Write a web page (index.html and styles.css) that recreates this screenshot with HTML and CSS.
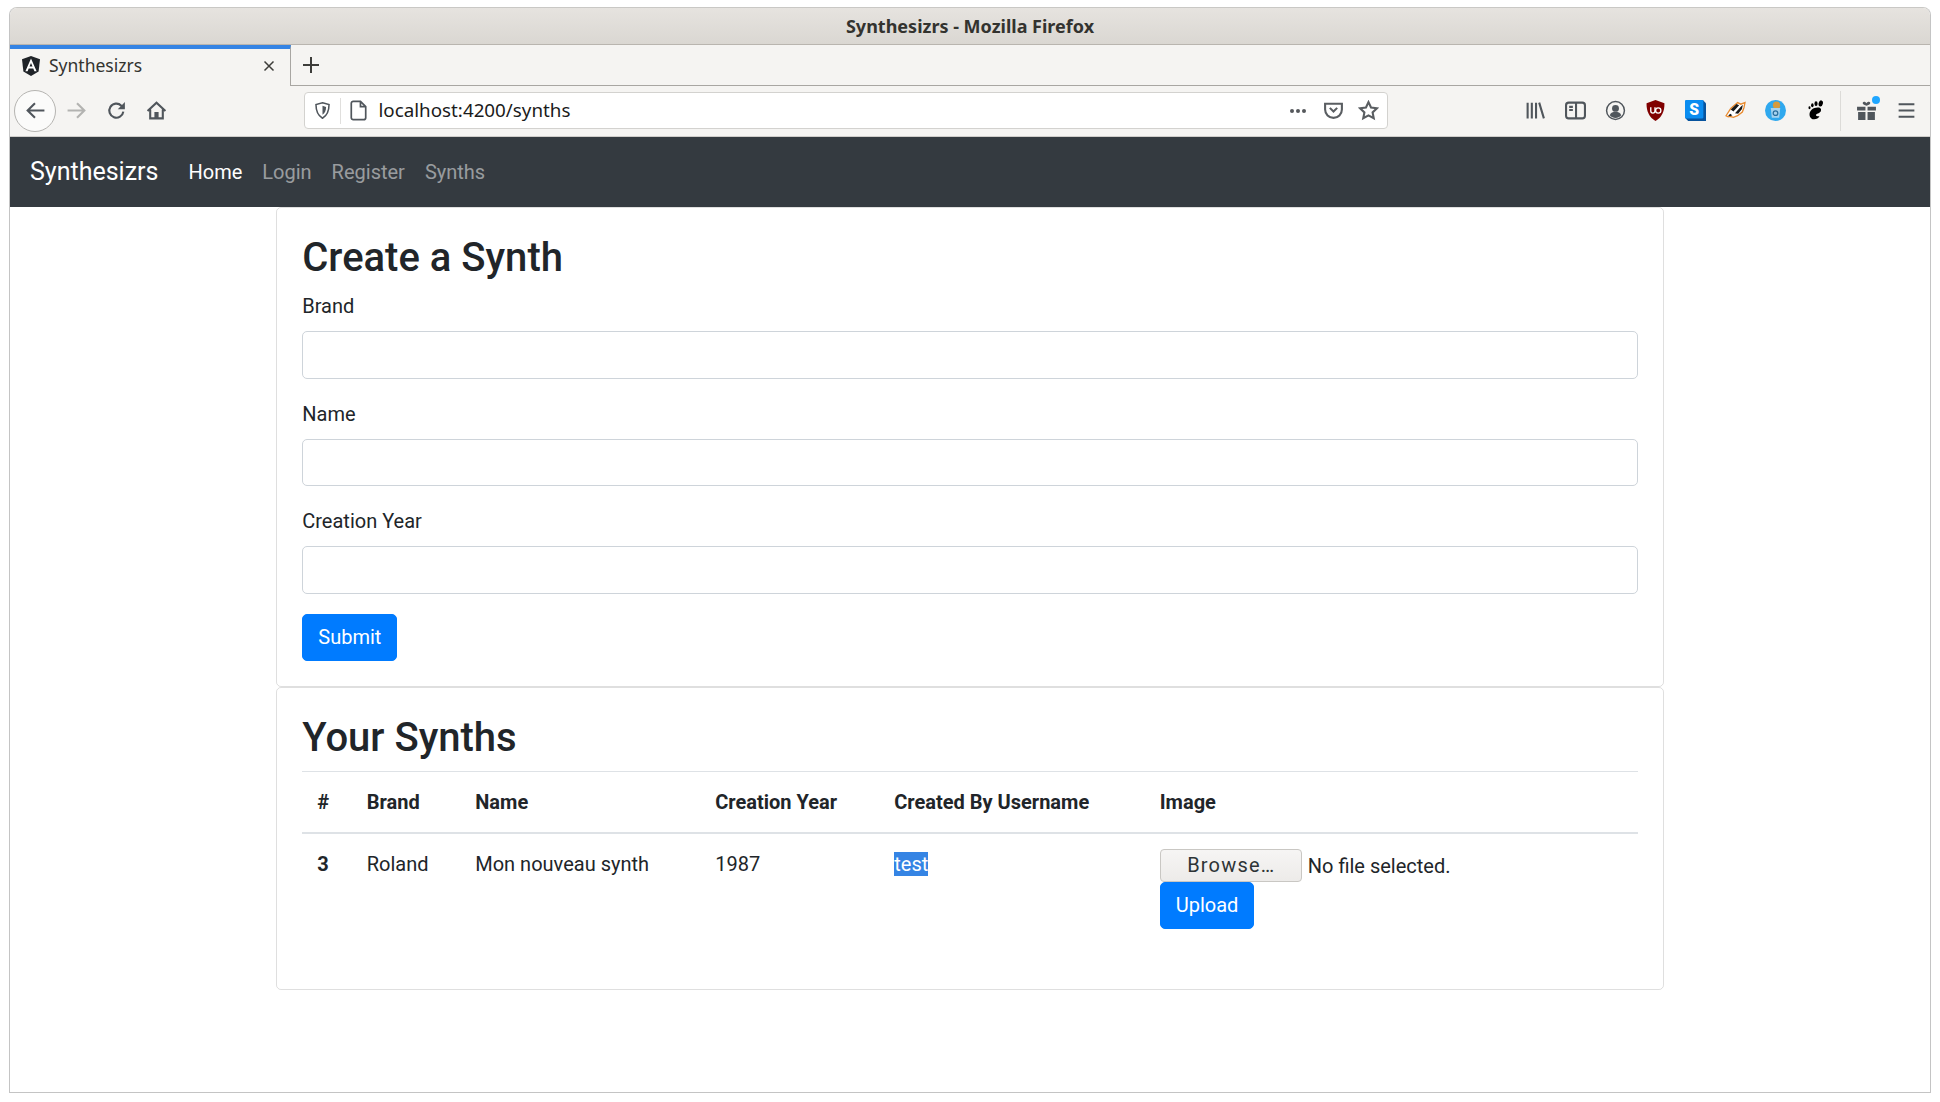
FILE: index.html
```html
<!DOCTYPE html>
<html lang="en">
<head>
    <meta charset="UTF-8">
    <meta name="viewport" content="width=device-width, initial-scale=1.0">
    <title>Synthesizrs - Mozilla Firefox</title>
    <link rel="stylesheet" href="styles.css">
</head>
<body>
    <div class="window">
        <div class="titlebar">Synthesizrs - Mozilla Firefox</div>

        <div class="tabstrip">
            <div class="tab">
                <svg class="favicon" viewBox="0 0 20 20">
                    <path fill="#1f2328" d="M10 0 19 3.300 17.600 15.500 10 20 2.400 15.500 1 3.300Z"/>
                    <path fill="#fff" fill-rule="evenodd" d="M10 2.600 4.400 15.200h2.200l1.100-2.800h4.600l1.100 2.800h2.200ZM8.500 10.600 10 6.900l1.500 3.700Z"/>
                </svg>
                <span class="tab-title">Synthesizrs</span>
                <svg class="tab-close" viewBox="0 0 12 12"><path d="M1.500 1.500 10.500 10.500M10.500 1.500 1.500 10.500"/></svg>
            </div>
            <div class="newtab">
                <svg viewBox="0 0 18 18"><path d="M9 1V17M1 9H17"/></svg>
            </div>
        </div>

        <div class="toolbar">
            <div class="back-btn">
                <svg class="ico" viewBox="0 0 20 20"><path d="M18.500 10H3M9.500 3 2.500 10l7 7"/></svg>
            </div>
            <div class="tool-btn">
                <svg class="ico faded" viewBox="0 0 20 20"><path d="M1.500 10H17M10.500 3 17.500 10l-7 7"/></svg>
            </div>
            <div class="tool-btn">
                <svg class="ico" viewBox="0 0 20 20"><path d="M16.500 11a6.700 6.700 0 1 1-1.900-5.600L17 7.500"/><path class="solid" d="M18 2V8.800H11.200Z"/></svg>
            </div>
            <div class="tool-btn">
                <svg class="ico" viewBox="0 0 20 20"><path d="M1.500 10.500 10 2.500l8.500 8M4 9v8.500h12V9"/><path class="solid" d="M8 11.500h4V17.500H8Z"/></svg>
            </div>

            <div class="urlbar">
                <svg class="url-shield" viewBox="0 0 16 16"><path class="thin" d="M8 1.500 13.500 3c0 5-1 9-5.500 11.500C3.500 12 2.500 8 2.500 3Z"/><path class="solid" d="M8 4 11 5c0 3-.8 5-3 6.500Z"/></svg>
                <span class="url-sep"></span>
                <svg class="url-page" viewBox="0 0 16 16"><path class="thin" d="M2.500 2.500a1.500 1.500 0 0 1 1.500-1.500H9.500L13.500 5v8.500a1.500 1.500 0 0 1-1.500 1.500H4a1.500 1.500 0 0 1-1.500-1.500ZM9.500 1V5H13.500"/></svg>
                <span class="url-text">localhost:4200/synths</span>
                <span class="url-dots"><i></i><i></i><i></i></span>
                <svg class="url-pocket" viewBox="0 0 20 20"><path d="M2 3.500h16V9a8 8 0 0 1-16 0Z"/><path d="M6.500 7.500 10 11l3.500-3.500"/></svg>
                <svg class="url-star" viewBox="0 0 20 20"><path d="M10 2l2.400 5.200 5.600.7-4.100 3.900 1.100 5.600-5-2.800-5 2.800 1.100-5.600L2 7.900l5.600-.7Z"/></svg>
            </div>

            <div class="tool-icons">
                <div class="tool-btn">
                    <svg class="ico" viewBox="0 0 20 20"><path d="M2.500 2.500V17.500M6.500 2.500V17.500M10.500 2.500V17.500M13.500 2.500 18 17.500"/></svg>
                </div>
                <div class="tool-btn">
                    <svg class="ico" viewBox="0 0 20 20"><rect x="1" y="2.500" width="18" height="15" rx="2.500"/><path d="M10.500 2.500V17.500M4 6.500H7.500M4 9.500H7.500"/></svg>
                </div>
                <div class="tool-btn">
                    <svg class="ico thin-ico" viewBox="0 0 20 20"><circle cx="10" cy="10" r="8.500"/><circle class="solid" cx="10" cy="8" r="3.300"/><path class="solid" d="M4.500 14.500c1-2.500 3-3 5.500-3s4.500.5 5.500 3c-1.500 1.800-3.500 2.600-5.500 2.600s-4-.8-5.500-2.600Z"/></svg>
                </div>
                <div class="tool-btn">
                    <svg class="logo" viewBox="0 0 20 20">
                        <path fill="#800000" d="M10 0 18.500 3c.3 7.800-2.700 13.500-8.500 17C4.200 16.500 1.200 10.800 1.500 3Z"/>
                        <path fill="none" stroke="#fff" stroke-width="1.300" d="M5.500 7v3.500a2 2 0 0 0 4 0V7"/>
                        <circle fill="none" stroke="#fff" stroke-width="1.300" cx="12.600" cy="10" r="2.500"/>
                    </svg>
                </div>
                <div class="tool-btn">
                    <svg class="logo" viewBox="0 0 20 20">
                        <path fill="#07539e" d="M0 17 3 20H20V3L17 0Z"/>
                        <rect fill="#0a8cf0" x="0" y="0" width="17.500" height="17.500" rx="1"/>
                        <text class="skype-s" x="8.800" y="14" text-anchor="middle">S</text>
                    </svg>
                </div>
                <div class="tool-btn">
                    <svg class="logo" viewBox="0 0 20 20">
                        <path fill="#fff" stroke="#e98a2e" stroke-width="1.300" d="M1 15 5.500 8 9 5l3-2.500L15 4l4-1.500-1 5-1.500 4L12 15l-4 1.500-3.500-1-1.500.5Z"/>
                        <path fill="#1a1a1a" d="M5.500 9 11 3.800 13.500 5 8 11ZM9.500 12.500 15 6.500l2-2-.8 4-3.700 4.500ZM3 15l2-2 2 1.500-2 1Z"/>
                    </svg>
                </div>
                <div class="tool-btn">
                    <svg class="logo" viewBox="0 0 20 20">
                        <circle fill="#2fa8ee" cx="10" cy="10" r="10"/>
                        <circle fill="#d59b3d" cx="11" cy="5" r="3.500"/>
                        <path fill="#a6d3ef" d="M5.500 7.500h9L13.500 17h-7Z"/>
                        <circle fill="none" stroke="#2a6f9f" stroke-width="1.200" cx="10" cy="12.500" r="2.200"/>
                    </svg>
                </div>
                <div class="tool-btn">
                    <svg class="logo" viewBox="0 0 20 20">
                        <path fill="#000" d="M12 7.200c3-.5 4 2 2.800 4-1.200 1.800-4 1.600-4.300 3-.2 1.200 2 1.500 3.300 1.300-1.200 2.800-5.800 4-8 1.800C3.500 15 4 11 6.500 9c1.700-1.300 3.500-1.500 5.500-1.800Z"/>
                        <ellipse fill="#000" cx="15" cy="3.300" rx="2" ry="3" transform="rotate(15 15 3.300)"/>
                        <ellipse fill="#000" cx="10.500" cy="3.500" rx="1.500" ry="2.300"/>
                        <ellipse fill="#000" cx="7" cy="5" rx="1.200" ry="1.800"/>
                        <ellipse fill="#000" cx="4.300" cy="7.300" rx="1" ry="1.400"/>
                    </svg>
                </div>
                <span class="tool-sep"></span>
                <div class="tool-btn">
                    <svg class="logo" viewBox="0 0 20 20">
                        <path fill="#50565c" d="M1 6.500H9V10H1ZM11 6.500H19V10H11ZM2 11.500H9V19H2ZM11 11.500H18V19H11Z"/>
                        <path fill="#50565c" d="M10 5.500C7 4.500 6 3.500 6.500 2.300S9 1.500 10 3c1-1.500 3-1.800 3.500-.7S13 4.500 10 5.500Z"/>
                    </svg>
                    <span class="gift-dot"></span>
                </div>
                <div class="tool-btn">
                    <svg class="ico" viewBox="0 0 20 20"><path d="M2.500 4H17.500M2.500 10H17.500M2.500 16H17.500"/></svg>
                </div>
            </div>
        </div>

        <nav class="navbar">
            <a class="navbar-brand" href="#">Synthesizrs</a>
            <a class="nav-link active" href="#">Home</a>
            <a class="nav-link" href="#">Login</a>
            <a class="nav-link" href="#">Register</a>
            <a class="nav-link" href="#">Synths</a>
        </nav>

        <div class="container">
            <div class="card">
                <h2>Create a Synth</h2>
                <div class="form-group">
                    <label for="brand">Brand</label>
                    <input id="brand" class="form-control" type="text">
                </div>
                <div class="form-group">
                    <label for="name">Name</label>
                    <input id="name" class="form-control" type="text">
                </div>
                <div class="form-group">
                    <label for="year">Creation Year</label>
                    <input id="year" class="form-control" type="text">
                </div>
                <button class="btn">Submit</button>
            </div>

            <div class="card">
                <h2>Your Synths</h2>
                <table class="table">
                    <thead>
                        <tr>
                            <th class="col-id">#</th>
                            <th class="col-brand">Brand</th>
                            <th class="col-name">Name</th>
                            <th class="col-year">Creation Year</th>
                            <th class="col-user">Created By Username</th>
                            <th>Image</th>
                        </tr>
                    </thead>
                    <tbody>
                        <tr>
                            <th>3</th>
                            <td>Roland</td>
                            <td>Mon nouveau synth</td>
                            <td>1987</td>
                            <td><span class="selected">test</span></td>
                            <td>
                                <div class="file-row">
                                    <button class="browse">Browse…</button>
                                    <span class="file-name">No file selected.</span>
                                </div>
                                <button class="btn">Upload</button>
                            </td>
                        </tr>
                    </tbody>
                </table>
            </div>
        </div>
    </div>
</body>
</html>
```

FILE: styles.css
```css
* {
    box-sizing: border-box;
}

body {
    margin: 0;
    background: #fff;
    font-family: Roboto, Arial, sans-serif;
    font-size: 20px;
    line-height: 1.5;
    color: #212529;
}

/* Browser window */
.window {
    width: 1922px;
    height: 1086px;
    margin: 7px 9px 0;
    border: 1px solid #c4c4c4;
    border-top-color: #c9c8c5;
    border-radius: 8px 8px 0 0;
    overflow: hidden;
    background: #fff;
}

.titlebar {
    height: 37px;
    border-bottom: 1px solid #b9b5af;
    background: linear-gradient(#e6e3df, #dad7d2);
    font-family: "Noto Sans", sans-serif;
    font-size: 18px;
    font-weight: 700;
    line-height: 36px;
    text-align: center;
    color: #33332f;
}

.tabstrip {
    display: flex;
    height: 41px;
    background: #f5f4f2;
}

.tab {
    display: flex;
    align-items: center;
    width: 281px;
    border-top: 4px solid #3584e4;
    border-right: 1px solid #a8a6a2;
    padding: 0 15px 4px 11px;
}

.favicon {
    width: 20px;
    height: 20px;
}

.tab-title {
    flex: 1;
    margin-left: 8px;
    font-family: "Noto Sans", sans-serif;
    font-size: 17.500px;
    color: #33332f;
}

.tab-close {
    width: 12px;
    height: 12px;
    fill: none;
    stroke: #3d3d3a;
    stroke-width: 1.500;
}

.newtab {
    display: flex;
    flex: 1;
    align-items: center;
    border-bottom: 1px solid #a8a6a2;
    padding-left: 11px;
}

.newtab svg {
    width: 18px;
    height: 18px;
    fill: none;
    stroke: #3d3d3a;
    stroke-width: 2;
}

.toolbar {
    display: flex;
    align-items: center;
    height: 51px;
    border-bottom: 1px solid #cfcdca;
    padding: 0 0 1px 4px;
    background: #f5f4f2;
}

.back-btn {
    display: flex;
    align-items: center;
    justify-content: center;
    width: 42px;
    height: 42px;
    border: 1px solid #b5b4b1;
    border-radius: 50%;
    background: #fbfbfa;
}

.tool-btn {
    position: relative;
    display: flex;
    align-items: center;
    justify-content: center;
    width: 40px;
    height: 40px;
}

.ico {
    width: 21px;
    height: 21px;
    fill: none;
    stroke: #50565c;
    stroke-width: 2;
}

.ico.faded {
    stroke: #b3b3b1;
}

.thin-ico {
    stroke-width: 1.400;
}

.solid {
    fill: #50565c;
    stroke: none;
}

.logo {
    width: 21px;
    height: 21px;
}

.skype-s {
    font-family: Roboto, Arial, sans-serif;
    font-size: 15px;
    font-weight: 900;
    fill: #fff;
}

.gift-dot {
    position: absolute;
    top: 5px;
    right: 6px;
    width: 8px;
    height: 8px;
    border-radius: 50%;
    background: #1fa6ff;
}

/* Location bar */
.urlbar {
    display: flex;
    align-items: center;
    width: 1084px;
    height: 37px;
    margin-left: 128px;
    border: 1px solid #d3d2cf;
    border-radius: 4px;
    padding: 0 5px 0 8px;
    background: #fff;
}

.url-shield {
    width: 19px;
    height: 19px;
}

.url-page {
    width: 21px;
    height: 21px;
}

.url-shield path.thin,
.url-page path.thin {
    fill: none;
    stroke: #50565c;
    stroke-width: 1.300;
}

.url-sep {
    width: 1px;
    height: 26px;
    margin: 0 7px 0 8px;
    background: #e0dfdd;
}

.url-text {
    flex: 1;
    margin-left: 9.500px;
    font-family: "Noto Sans", sans-serif;
    font-size: 18.800px;
    color: #1b1b1b;
}

.url-dots {
    display: flex;
    gap: 2px;
    margin-right: 17px;
}

.url-dots i {
    width: 4px;
    height: 4px;
    border-radius: 50%;
    background: #55585c;
}

.url-pocket,
.url-star {
    width: 21px;
    height: 21px;
    fill: none;
    stroke: #5a5e62;
    stroke-width: 2;
}

.url-pocket {
    margin-right: 14px;
}

.url-star {
    margin-right: 3px;
}

.tool-icons {
    display: flex;
    align-items: center;
    margin-left: 127px;
}

.tool-sep {
    width: 1px;
    height: 40px;
    margin: 0 5px 0 5px;
    background: #dcdbd8;
}

/* Page content */
.navbar {
    display: flex;
    align-items: center;
    height: 70px;
    padding: 10px 20px;
    background: #343a40;
}

.navbar-brand {
    margin-right: 20px;
    font-size: 25px;
    color: #fff;
    text-decoration: none;
}

.nav-link {
    padding: 10px;
    color: rgba(255, 255, 255, .5);
    text-decoration: none;
}

.nav-link.active {
    color: #fff;
}

.container {
    width: 1425px;
    margin: 0 auto;
    padding: 0 18.750px;
}

.card {
    border: 1px solid rgba(0, 0, 0, .125);
    border-radius: 5px;
    padding: 25px;
}

h2 {
    margin: 0 0 9px;
    padding-top: 1px;
    font-size: 40px;
    font-weight: 500;
    line-height: 1.200;
}

.form-group {
    margin-bottom: 20px;
}

label {
    display: block;
    margin-bottom: 10px;
}

.form-control {
    display: block;
    width: 100%;
    height: 47.500px;
    border: 1px solid #ced4da;
    border-radius: 5px;
    padding: 7.500px 15px;
    background: #fff;
    font: inherit;
}

.btn {
    display: block;
    border: 1px solid #007bff;
    border-radius: 5px;
    padding: 7.500px 15px;
    background: #007bff;
    font: inherit;
    color: #fff;
}

/* Table */
.table {
    width: 100%;
    margin-bottom: 20px;
    border-collapse: collapse;
    table-layout: fixed;
}

.table th,
.table td {
    border-top: 1px solid #dee2e6;
    padding: 15px;
    text-align: left;
    vertical-align: top;
}

.table th {
    font-weight: 700;
}

.table thead th {
    border-bottom: 2.500px solid #dee2e6;
}

.col-id {
    width: 49.500px;
}

.col-brand {
    width: 108.500px;
}

.col-name {
    width: 240px;
}

.col-year {
    width: 179px;
}

.col-user {
    width: 265.500px;
}

.selected {
    display: inline-block;
    background: #3584e4;
    line-height: 24px;
    color: #fff;
}

.file-row {
    display: flex;
    align-items: center;
    height: 33px;
}

.browse {
    width: 142px;
    height: 33px;
    border: 1px solid #c9c7c3;
    border-radius: 4px;
    padding: 0 0 0 1px;
    background: linear-gradient(#f6f5f4, #edebe9);
    font: inherit;
    letter-spacing: 1.200px;
    color: #2e3436;
}

.file-name {
    margin-left: 6px;
    padding-top: 2px;
}
```
